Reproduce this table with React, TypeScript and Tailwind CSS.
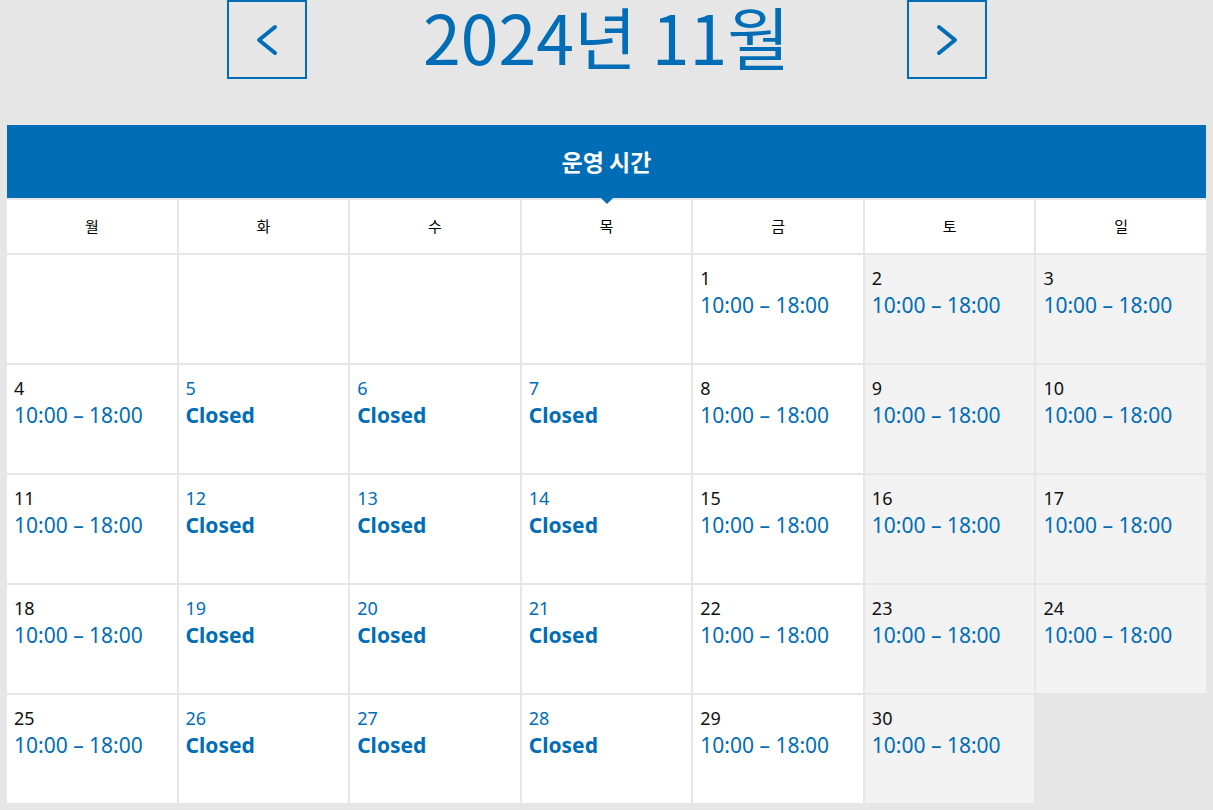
import { useMemo } from "react";

const WEEKDAYS = ["월", "화", "수", "목", "금", "토", "일"];
const FIRST_OFFSET = 4; // 2024-11-01 is a Friday
const DAYS_IN_MONTH = 30;

function Chevron({ dir }: { dir: "left" | "right" }) {
  return (
    <svg width="24" height="32" viewBox="0 0 24 32" fill="none">
      <polyline
        points={dir === "left" ? "20,3 4,16 20,29" : "4,3 20,16 4,29"}
        stroke="#006db6"
        strokeWidth="4"
        strokeLinecap="round"
        strokeLinejoin="round"
      />
    </svg>
  );
}

function NavButton({ dir }: { dir: "left" | "right" }) {
  return (
    <button className="flex h-[79px] w-[80px] items-center justify-center border-2 border-[#006db6]">
      <Chevron dir={dir} />
    </button>
  );
}

function DayCell({ day, col }: { day: number; col: number }) {
  const closed = col >= 1 && col <= 3;
  const weekend = col >= 5;
  return (
    <div className={`h-[108px] pl-[7px] pt-[11px] ${weekend ? "bg-[#f2f2f2]" : "bg-white"}`}>
      <div className={`text-[18px] leading-[24px] ${closed ? "text-[#006db6]" : "text-[#111]"}`}>
        {day}
      </div>
      {closed ? (
        <div className="text-[21px] font-bold leading-[30px] text-[#006db6]">Closed</div>
      ) : (
        <div className="text-[21px] leading-[30px] text-[#006db6]">10:00 – 18:00</div>
      )}
    </div>
  );
}

export default function App() {
  const cells = useMemo(
    () => Array.from({ length: 35 }, (_, i) => i - FIRST_OFFSET + 1),
    []
  );

  return (
    <div className="h-[810px] overflow-hidden bg-[#e6e6e6] font-['Noto_Sans',sans-serif]">
      <div className="flex h-[125px] items-start justify-center">
        <NavButton dir="left" />
        <h1 className="w-[600px] text-center font-['Noto_Sans_CJK_KR',sans-serif] text-[68px] font-normal leading-[71px] text-[#006db6]">
          2024년 11월
        </h1>
        <NavButton dir="right" />
      </div>

      <div className="relative mx-[7px] flex h-[73px] items-center justify-center bg-[#006db6] font-['Noto_Sans_CJK_KR',sans-serif] text-[23px] font-bold text-white">
        운영 시간
        <span className="absolute left-1/2 top-full z-10 -translate-x-1/2 border-x-[6px] border-t-[6px] border-x-transparent border-t-[#006db6]" />
      </div>

      <div className="mx-[7px] mt-[2px] grid grid-cols-7 gap-[2px]">
        {WEEKDAYS.map((w) => (
          <div
            key={w}
            className="flex h-[53px] items-center justify-center bg-white font-['Noto_Sans_CJK_KR',sans-serif] text-[15px] text-black"
          >
            {w}
          </div>
        ))}
        {cells.map((day, i) => {
          if (day < 1) return <div key={i} className="h-[108px] bg-white" />;
          if (day > DAYS_IN_MONTH) return <div key={i} className="h-[108px]" />;
          return <DayCell key={i} day={day} col={i % 7} />;
        })}
      </div>
    </div>
  );
}
